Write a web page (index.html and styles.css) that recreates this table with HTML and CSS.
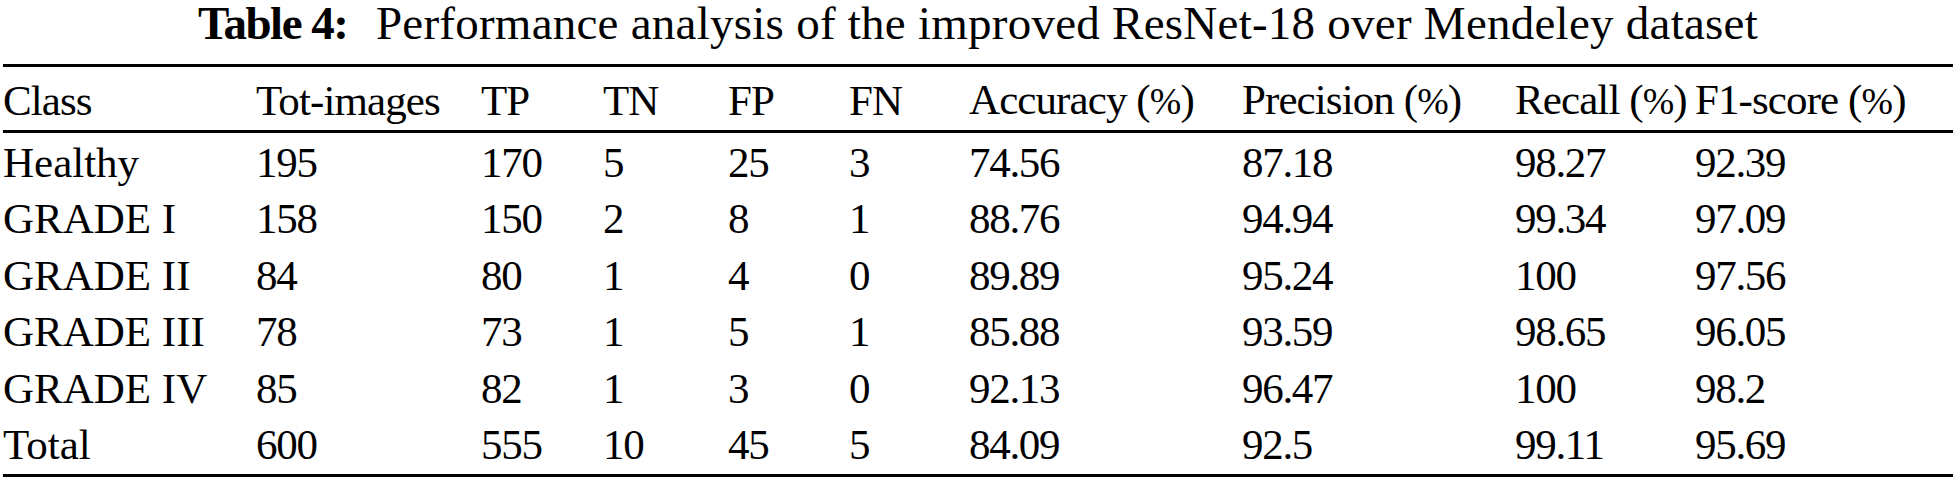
FILE: index.html
```html
<!DOCTYPE html>
<html lang="en">
<head>
  <meta charset="UTF-8">
  <title>Table 4</title>
  <link rel="stylesheet" href="styles.css">
</head>
<body>

  <table class="results">
    <caption><span class="label">Table 4:</span> Performance analysis of the improved ResNet-18 over Mendeley dataset</caption>
    <colgroup>
      <col class="c-class">
      <col class="c-tot">
      <col class="c-tp">
      <col class="c-tn">
      <col class="c-fp">
      <col class="c-fn">
      <col class="c-acc">
      <col class="c-prec">
      <col class="c-rec">
      <col class="c-f1">
    </colgroup>
    <thead>
      <tr>
        <th>Class</th>
        <th>Tot-images</th>
        <th>TP</th>
        <th>TN</th>
        <th>FP</th>
        <th>FN</th>
        <th>Accuracy (<span class="pct">%</span>)</th>
        <th>Precision (<span class="pct">%</span>)</th>
        <th>Recall (<span class="pct">%</span>)</th>
        <th>F1-score (<span class="pct">%</span>)</th>
      </tr>
    </thead>
    <tbody>
      <tr><td>Healthy</td><td>195</td><td>170</td><td>5</td><td>25</td><td>3</td><td>74.56</td><td>87.18</td><td>98.27</td><td>92.39</td></tr>
      <tr><td>GRADE I</td><td>158</td><td>150</td><td>2</td><td>8</td><td>1</td><td>88.76</td><td>94.94</td><td>99.34</td><td>97.09</td></tr>
      <tr><td>GRADE II</td><td>84</td><td>80</td><td>1</td><td>4</td><td>0</td><td>89.89</td><td>95.24</td><td>100</td><td>97.56</td></tr>
      <tr><td>GRADE III</td><td>78</td><td>73</td><td>1</td><td>5</td><td>1</td><td>85.88</td><td>93.59</td><td>98.65</td><td>96.05</td></tr>
      <tr><td>GRADE IV</td><td>85</td><td>82</td><td>1</td><td>3</td><td>0</td><td>92.13</td><td>96.47</td><td>100</td><td>98.2</td></tr>
      <tr><td>Total</td><td>600</td><td>555</td><td>10</td><td>45</td><td>5</td><td>84.09</td><td>92.5</td><td>99.11</td><td>95.69</td></tr>
    </tbody>
  </table>

</body>
</html>
```

FILE: styles.css
```css
body { margin: 0; background: #fff; color: #000; font-family: "Liberation Serif", "Times New Roman", serif; }

.results { margin-left: 3px; width: 1950px; table-layout: fixed; border-collapse: separate; border-spacing: 0; font-size: 43px; }
.results caption { font-size: 47px; line-height: 46px; padding-bottom: 18px; text-align: center; white-space: nowrap; letter-spacing: 0.25px; }
.results caption .label { font-weight: bold; letter-spacing: -1.5px; margin-right: 0.35em; }

.results th, .results td { padding: 0; text-align: left; font-weight: normal; line-height: 56.5px; white-space: nowrap; }
.results th { border-top: 3px solid #000; border-bottom: 3px solid #000; padding-top: 5px; letter-spacing: -0.9px; }
.results td + td { letter-spacing: -1.3px; }
.results tbody tr:first-child td { padding-top: 2px; }
.results tbody tr:last-child td { border-bottom: 3px solid #000; }
.pct { font-size: 0.88em; }

.c-class { width: 253px; }
.c-tot { width: 225px; }
.c-tp { width: 122px; }
.c-tn { width: 125px; }
.c-fp { width: 121px; }
.c-fn { width: 120px; }
.c-acc { width: 273px; }
.c-prec { width: 273px; }
.c-rec { width: 180px; }
.c-f1 { width: 258px; }
```
